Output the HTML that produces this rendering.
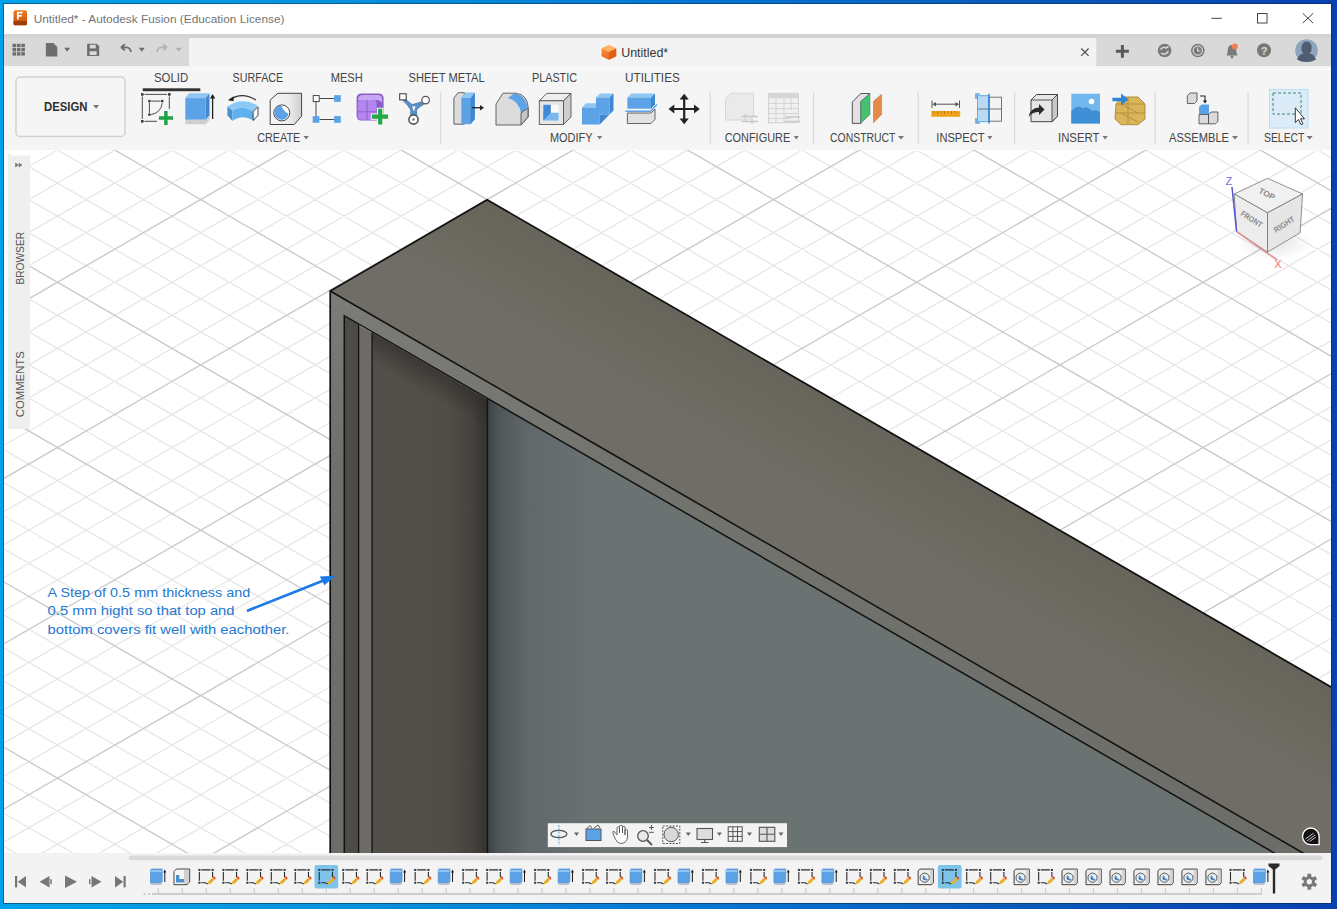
<!DOCTYPE html>
<html><head><meta charset="utf-8"><title>Untitled* - Autodesk Fusion</title>
<style>
html,body{margin:0;padding:0;width:1337px;height:909px;overflow:hidden;}
body{position:relative;background:linear-gradient(90deg,#02a2ea 0%,#0892dc 25%,#0578d4 50%,#0a5abb 76%,#0840b0 100%);font-family:"Liberation Sans",sans-serif;}
.a{position:absolute;}
</style></head><body>
<div class="a" style="left:3px;top:3px;width:1329px;height:901px;background:rgba(10,40,80,0.55)"></div>
<div class="a" style="left:4px;top:4px;width:1327px;height:899px;background:#f5f5f5;overflow:hidden"></div>
<svg style="position:absolute;left:0;top:0" width="1337" height="909" viewBox="0 0 1337 909"><defs><clipPath id="vp"><rect x="4" y="150" width="1327" height="703"/></clipPath><linearGradient id="back" x1="487.5" y1="0" x2="600" y2="0" gradientUnits="userSpaceOnUse"><stop offset="0" stop-color="#3a4244"/><stop offset="0.1" stop-color="#4e5658"/><stop offset="0.35" stop-color="#61686a"/><stop offset="1" stop-color="#6b7272"/></linearGradient><linearGradient id="rim" x1="330" y1="291" x2="1300" y2="853" gradientUnits="userSpaceOnUse"><stop offset="0" stop-color="#7b7b77"/><stop offset="0.35" stop-color="#73736e"/><stop offset="1" stop-color="#6c6d68"/></linearGradient><linearGradient id="intr" x1="372" y1="0" x2="487.5" y2="0" gradientUnits="userSpaceOnUse"><stop offset="0" stop-color="#53504b"/><stop offset="0.65" stop-color="#514d48"/><stop offset="0.87" stop-color="#46433e"/><stop offset="1" stop-color="#33312e"/></linearGradient><linearGradient id="lbar" x1="0" y1="300" x2="0" y2="853" gradientUnits="userSpaceOnUse"><stop offset="0" stop-color="#7b7b77"/><stop offset="0.27" stop-color="#70716c"/><stop offset="1" stop-color="#6d6d68"/></linearGradient><linearGradient id="topf" x1="700" y1="322.3" x2="621.25" y2="458.7" gradientUnits="userSpaceOnUse"><stop offset="0" stop-color="#67645b"/><stop offset="0.3" stop-color="#6b685f"/><stop offset="0.62" stop-color="#706e66"/><stop offset="1" stop-color="#6f6d66"/></linearGradient><linearGradient id="ishad" x1="430" y1="367" x2="417" y2="389.5" gradientUnits="userSpaceOnUse"><stop offset="0" stop-color="#2a2825" stop-opacity="0.55"/><stop offset="1" stop-color="#2a2825" stop-opacity="0"/></linearGradient></defs><rect x="4" y="150" width="1327" height="703" fill="#ffffff"/><g clip-path="url(#vp)"><path d="M-1.00 -611.07L1336.00 160.60M-1.00 -544.95L1336.00 226.72M-1.00 -511.89L1336.00 259.78M-1.00 -478.83L1336.00 292.84M-1.00 -445.77L1336.00 325.90M-1.00 -379.65L1336.00 392.02M-1.00 183.77L1336.00 -587.90M-1.00 -346.59L1336.00 425.08M-1.00 216.83L1336.00 -554.84M-1.00 -313.53L1336.00 458.14M-1.00 249.89L1336.00 -521.78M-1.00 -280.47L1336.00 491.20M-1.00 282.95L1336.00 -488.72M-1.00 -214.35L1336.00 557.32M-1.00 349.07L1336.00 -422.60M-1.00 -181.29L1336.00 590.38M-1.00 382.13L1336.00 -389.54M-1.00 -148.23L1336.00 623.44M-1.00 415.19L1336.00 -356.48M-1.00 -115.17L1336.00 656.50M-1.00 448.25L1336.00 -323.42M-1.00 -49.05L1336.00 722.62M-1.00 514.37L1336.00 -257.30M-1.00 -15.99L1336.00 755.68M-1.00 547.43L1336.00 -224.24M-1.00 17.07L1336.00 788.74M-1.00 580.49L1336.00 -191.18M-1.00 50.13L1336.00 821.80M-1.00 613.55L1336.00 -158.12M-1.00 116.25L1336.00 887.92M-1.00 679.67L1336.00 -92.00M-1.00 149.31L1336.00 920.98M-1.00 712.73L1336.00 -58.94M-1.00 182.37L1336.00 954.04M-1.00 745.79L1336.00 -25.88M-1.00 215.43L1336.00 987.10M-1.00 778.85L1336.00 7.18M-1.00 281.55L1336.00 1053.22M-1.00 844.97L1336.00 73.30M-1.00 314.61L1336.00 1086.28M-1.00 878.03L1336.00 106.36M-1.00 347.67L1336.00 1119.34M-1.00 911.09L1336.00 139.42M-1.00 380.73L1336.00 1152.40M-1.00 944.15L1336.00 172.48M-1.00 446.85L1336.00 1218.52M-1.00 1010.27L1336.00 238.60M-1.00 479.91L1336.00 1251.58M-1.00 1043.33L1336.00 271.66M-1.00 512.97L1336.00 1284.64M-1.00 1076.39L1336.00 304.72M-1.00 546.03L1336.00 1317.70M-1.00 1109.45L1336.00 337.78M-1.00 612.15L1336.00 1383.82M-1.00 1175.57L1336.00 403.90M-1.00 645.21L1336.00 1416.88M-1.00 1208.63L1336.00 436.96M-1.00 678.27L1336.00 1449.94M-1.00 1241.69L1336.00 470.02M-1.00 711.33L1336.00 1483.00M-1.00 1274.75L1336.00 503.08M-1.00 777.45L1336.00 1549.12M-1.00 1340.87L1336.00 569.20M-1.00 810.51L1336.00 1582.18M-1.00 1373.93L1336.00 602.26M-1.00 843.57L1336.00 1615.24M-1.00 1406.99L1336.00 635.32M-1.00 1440.05L1336.00 668.38M-1.00 1506.17L1336.00 734.50M-1.00 1539.23L1336.00 767.56M-1.00 1572.29L1336.00 800.62M-1.00 1605.35L1336.00 833.68" stroke="#e6e6e6" stroke-width="1.25" fill="none"/><path d="M-1.00 -578.01L1336.00 193.66M-1.00 -412.71L1336.00 358.96M-1.00 150.71L1336.00 -620.96M-1.00 -247.41L1336.00 524.26M-1.00 316.01L1336.00 -455.66M-1.00 -82.11L1336.00 689.56M-1.00 481.31L1336.00 -290.36M-1.00 83.19L1336.00 854.86M-1.00 646.61L1336.00 -125.06M-1.00 248.49L1336.00 1020.16M-1.00 811.91L1336.00 40.24M-1.00 413.79L1336.00 1185.46M-1.00 977.21L1336.00 205.54M-1.00 579.09L1336.00 1350.76M-1.00 1142.51L1336.00 370.84M-1.00 744.39L1336.00 1516.06M-1.00 1307.81L1336.00 536.14M-1.00 1473.11L1336.00 701.44" stroke="#cbcbcb" stroke-width="1.4" fill="none"/><polygon points="330.2,291.0 487.1,199.8 1333,688.05 1333,855 1306.49,855" fill="url(#topf)"/><polygon points="330.2,291.0 1306.49,855 1277.67,855 344.3,315.7 344.3,855 330.2,855" fill="url(#rim)"/><polygon points="330.2,291.0 344.3,299.15 344.3,855 330.2,855" fill="url(#lbar)"/><polygon points="344.3,315.70 358.6,323.96 358.6,855 344.3,855" fill="#4e4a47"/><polygon points="358.6,324.96 372.1,332.76 372.1,855 358.6,855" fill="#6c6b66"/><polygon points="372.1,332.76 487.5,399.44 487.5,855 372.1,855" fill="url(#intr)"/><polygon points="487.5,398.44 1277.67,855 487.5,855" fill="url(#back)"/><polygon points="372.1,331.76 487.5,398.44 487.5,458.44 372.1,391.76" fill="url(#ishad)"/><path d="M330.2,855 L330.2,291.0 L487.1,199.8 L1333,688.05" stroke="#111" stroke-width="1.7" fill="none" stroke-linejoin="miter"/><path d="M330.2,291.0 L1306.49,855" stroke="#111" stroke-width="1.6" fill="none"/><path d="M344.3,855 L344.3,315.7 L1277.67,855" stroke="#111" stroke-width="1.5" fill="none"/><path d="M358.6,855 L358.6,324.46 M372.1,855 L372.1,332.76 M487.5,855 L487.5,398.94" stroke="#111" stroke-width="1.3" fill="none"/></g></svg>
<svg style="position:absolute;left:0;top:0" width="1337" height="909" viewBox="0 0 1337 909" font-family='"Liberation Sans",sans-serif'><rect x="4" y="4" width="1327" height="30" fill="#ffffff"/><defs><linearGradient id="appg" x1="0" y1="0" x2="0" y2="1"><stop offset="0" stop-color="#f0781e"/><stop offset="1" stop-color="#c2500c"/></linearGradient><linearGradient id="cubeg" x1="0" y1="0" x2="0" y2="1"><stop offset="0" stop-color="#ffa04a"/><stop offset="1" stop-color="#e8651a"/></linearGradient></defs><rect x="13.5" y="10.2" width="13.5" height="15" rx="2" fill="url(#appg)"/><rect x="13.5" y="21" width="13.5" height="4.3" rx="1" fill="#9a3f08"/><path d="M17.8 19.5V12.6H22.6M17.8 15.8H21.8" stroke="#fff" stroke-width="1.7" fill="none"/><text x="33.70" y="22.50" font-size="11.6" fill="#737373" font-weight="normal" textLength="250.80" lengthAdjust="spacingAndGlyphs">Untitled* - Autodesk Fusion (Education License)</text><path d="M1211.4 18.3H1221.9" stroke="#444" stroke-width="1"/><rect x="1257.5" y="13.5" width="9.5" height="9.5" stroke="#444" stroke-width="1" fill="none"/><path d="M1302.7 13.3L1313.1 23.1M1313.1 13.3L1302.7 23.1" stroke="#444" stroke-width="1"/><rect x="4" y="34" width="1327" height="32" fill="#d9d9d9"/><rect x="4" y="34" width="1327" height="4" fill="#d3d3d3"/><rect x="189" y="38" width="907.3" height="28" fill="#f3f3f3"/><rect x="12.5" y="43.8" width="3.6" height="3.4" fill="#6e6e6e"/><rect x="12.5" y="48.0" width="3.6" height="3.4" fill="#6e6e6e"/><rect x="12.5" y="52.2" width="3.6" height="3.4" fill="#6e6e6e"/><rect x="16.9" y="43.8" width="3.6" height="3.4" fill="#6e6e6e"/><rect x="16.9" y="48.0" width="3.6" height="3.4" fill="#6e6e6e"/><rect x="16.9" y="52.2" width="3.6" height="3.4" fill="#6e6e6e"/><rect x="21.3" y="43.8" width="3.6" height="3.4" fill="#6e6e6e"/><rect x="21.3" y="48.0" width="3.6" height="3.4" fill="#6e6e6e"/><rect x="21.3" y="52.2" width="3.6" height="3.4" fill="#6e6e6e"/><path d="M45.9 43.1H53.5L57.3 46.9V56.6H45.9Z" fill="#6e6e6e"/><polygon points="64.20,47.80 70.20,47.80 67.20,51.80" fill="#6e6e6e"/><path d="M87.1 43.8H96.7L99.2 46.3V55.9H87.1Z" fill="#6e6e6e"/><rect x="89.8" y="44.8" width="6" height="3.6" fill="#d9d9d9"/><rect x="89.6" y="51.2" width="7" height="3.8" fill="#d9d9d9"/><path d="M121 47.3 L125 44.3 M121 47.3 L125 50.3 M121.5 47.3 H126.5 A4.5 4.5 0 0 1 130.8 52" stroke="#6e6e6e" stroke-width="1.8" fill="none"/><polygon points="138.80,47.80 144.80,47.80 141.80,51.80" fill="#6e6e6e"/><path d="M167 47.3 L163 44.3 M167 47.3 L163 50.3 M166.5 47.3 H161.5 A4.5 4.5 0 0 0 157.2 52" stroke="#b4b4b4" stroke-width="1.8" fill="none"/><polygon points="175.70,47.80 181.70,47.80 178.70,51.80" fill="#b0b0b0"/><path d="M601.6 48.5L608.9 45.1L616.2 48.5V56.3L608.9 59.7L601.6 56.3Z" fill="url(#cubeg)"/><path d="M601.6 48.5L608.9 51.9L616.2 48.5L608.9 45.1Z" fill="#ffb366"/><path d="M608.9 51.9V59.7L616.2 56.3V48.5Z" fill="#e05e12"/><text x="621.20" y="56.70" font-size="12.5" fill="#333" font-weight="normal" textLength="47.00" lengthAdjust="spacingAndGlyphs">Untitled*</text><path d="M1081.2 48.5L1088.6 55.9M1088.6 48.5L1081.2 55.9" stroke="#555" stroke-width="1.3"/><path d="M1122.4 45V57.7M1115.9 51.3H1128.9" stroke="#5a5a5a" stroke-width="3"/><circle cx="1164.6" cy="50.5" r="6.8" fill="#787878"/><path d="M1160.5 49.5 Q1163 46 1166 48 L1168.5 46.5 M1161 53 Q1165 56 1168.5 51" stroke="#d9d9d9" stroke-width="1.5" fill="none"/><circle cx="1197.8" cy="50.5" r="6.8" fill="#787878"/><circle cx="1197.8" cy="50.5" r="4.6" fill="none" stroke="#d9d9d9" stroke-width="1.2"/><path d="M1197.6 47.5V51H1200.3" stroke="#d9d9d9" stroke-width="1.2" fill="none"/><path d="M1226.5 55.5Q1227.8 53.5 1227.8 49.5Q1228 45.2 1232 45Q1236 45.2 1236.2 49.5Q1236.2 53.5 1237.5 55.5Z" fill="#7a7a7a"/><circle cx="1232" cy="57" r="1.4" fill="#7a7a7a"/><circle cx="1234.8" cy="46.5" r="3" fill="#f08050"/><circle cx="1264" cy="50.3" r="7" fill="#787878"/><text x="1264" y="54.6" font-size="11" font-weight="bold" fill="#d9d9d9" text-anchor="middle">?</text><circle cx="1306.5" cy="50.5" r="11.3" fill="#8ea4bd"/><path d="M1297 59.5Q1299 54 1303.5 53.5Q1301 51 1301.5 47Q1302.5 41.5 1306.5 41.5Q1311 41.5 1311.7 47Q1312 51 1309.5 53.5Q1314 54 1316 59.5Q1312 62 1306.5 62Q1301 62 1297 59.5Z" fill="#4f5d70"/><rect x="4" y="66" width="1327" height="84" fill="#f5f5f5"/><rect x="4" y="68.6" width="1327" height="1" fill="#fcfcfc"/><rect x="16" y="77" width="109" height="59.5" rx="4" fill="#f5f5f5" stroke="#d2d2d2" stroke-width="1.5"/><text x="44.00" y="110.80" font-size="12.2" fill="#2e2e2e" font-weight="bold" textLength="43.50" lengthAdjust="spacingAndGlyphs">DESIGN</text><polygon points="93.10,104.90 99.10,104.90 96.10,108.70" fill="#777"/><text x="153.90" y="81.80" font-size="12.9" fill="#444444" font-weight="normal" textLength="34.30" lengthAdjust="spacingAndGlyphs">SOLID</text><text x="232.50" y="81.80" font-size="12.9" fill="#444444" font-weight="normal" textLength="50.70" lengthAdjust="spacingAndGlyphs">SURFACE</text><text x="330.70" y="81.80" font-size="12.9" fill="#444444" font-weight="normal" textLength="32.00" lengthAdjust="spacingAndGlyphs">MESH</text><text x="408.50" y="81.80" font-size="12.9" fill="#444444" font-weight="normal" textLength="76.10" lengthAdjust="spacingAndGlyphs">SHEET METAL</text><text x="532.00" y="81.80" font-size="12.9" fill="#444444" font-weight="normal" textLength="45.00" lengthAdjust="spacingAndGlyphs">PLASTIC</text><text x="625.00" y="81.80" font-size="12.9" fill="#444444" font-weight="normal" textLength="54.80" lengthAdjust="spacingAndGlyphs">UTILITIES</text><rect x="142.7" y="88.3" width="57.6" height="2.9" fill="#333"/><text x="257.20" y="141.70" font-size="12.6" fill="#444444" font-weight="normal" textLength="43.10" lengthAdjust="spacingAndGlyphs">CREATE</text><polygon points="303.50,136.00 308.80,136.00 306.15,139.60" fill="#777"/><text x="550.00" y="141.70" font-size="12.6" fill="#444444" font-weight="normal" textLength="42.50" lengthAdjust="spacingAndGlyphs">MODIFY</text><polygon points="597.00,136.00 602.20,136.00 599.60,139.60" fill="#777"/><text x="724.70" y="141.70" font-size="12.6" fill="#444444" font-weight="normal" textLength="65.50" lengthAdjust="spacingAndGlyphs">CONFIGURE</text><polygon points="793.80,136.00 798.80,136.00 796.30,139.60" fill="#777"/><text x="830.00" y="141.70" font-size="12.6" fill="#444444" font-weight="normal" textLength="65.50" lengthAdjust="spacingAndGlyphs">CONSTRUCT</text><polygon points="898.00,136.00 904.00,136.00 901.00,139.60" fill="#777"/><text x="936.30" y="141.70" font-size="12.6" fill="#444444" font-weight="normal" textLength="48.20" lengthAdjust="spacingAndGlyphs">INSPECT</text><polygon points="987.30,136.00 992.50,136.00 989.90,139.60" fill="#777"/><text x="1058.00" y="141.70" font-size="12.6" fill="#444444" font-weight="normal" textLength="41.50" lengthAdjust="spacingAndGlyphs">INSERT</text><polygon points="1102.50,136.00 1107.80,136.00 1105.15,139.60" fill="#777"/><text x="1169.00" y="141.70" font-size="12.6" fill="#444444" font-weight="normal" textLength="60.00" lengthAdjust="spacingAndGlyphs">ASSEMBLE</text><polygon points="1232.00,136.00 1238.00,136.00 1235.00,139.60" fill="#777"/><text x="1264.00" y="141.70" font-size="12.6" fill="#444444" font-weight="normal" textLength="40.40" lengthAdjust="spacingAndGlyphs">SELECT</text><polygon points="1306.50,136.00 1312.70,136.00 1309.60,139.60" fill="#777"/><rect x="440.0" y="92" width="1.3" height="52" fill="#dcdcdc"/><rect x="709.6" y="92" width="1.3" height="52" fill="#dcdcdc"/><rect x="812.9" y="92" width="1.3" height="52" fill="#dcdcdc"/><rect x="917.6" y="92" width="1.3" height="52" fill="#dcdcdc"/><rect x="1013.9" y="92" width="1.3" height="52" fill="#dcdcdc"/><rect x="1154.4" y="92" width="1.3" height="52" fill="#dcdcdc"/><rect x="1247.4" y="92" width="1.3" height="52" fill="#dcdcdc"/><rect x="141.0" y="93.10000000000001" width="2.6" height="2.6" fill="#3a3a3a"/><rect x="168.0" y="93.10000000000001" width="2.6" height="2.6" fill="#3a3a3a"/><rect x="141.0" y="120.0" width="2.6" height="2.6" fill="#3a3a3a"/><path d="M144.5 94.4H167M142.3 96.5V119M144.5 121.3H157M169.3 96.5V109" stroke="#3a3a3a" stroke-width="0.9" fill="none"/><rect x="148.20000000000002" y="99.89999999999999" width="2.4" height="2.4" fill="#3a3a3a"/><rect x="161.0" y="99.89999999999999" width="2.4" height="2.4" fill="#3a3a3a"/><rect x="148.20000000000002" y="113.39999999999999" width="2.4" height="2.4" fill="#3a3a3a"/><path d="M151 101.1H160.5M149.4 102.8V112.8M162.2 103.2Q161 112.5 151.2 114.6" stroke="#3a3a3a" stroke-width="0.9" fill="none"/><path d="M165.9 110.9V125M158.9 118H173" stroke="#1fa045" stroke-width="3.4"/><path d="M185.3 98.1L189 93.2H209.5L205.8 98.1Z" fill="#8fc6f2"/><path d="M205.8 98.1L209.5 93.2V115.3L205.8 119.8Z" fill="#3f88d0"/><rect x="185.3" y="98.1" width="20.5" height="21.7" fill="#5ba3e6"/><path d="M185.3 119.8H205.8L209.5 115.3V120L205.8 124.3H185.3Z" fill="#cfcfcf"/><path d="M212.6 119V97" stroke="#222" stroke-width="1.3"/><path d="M209.9 98.5L212.6 94L215.3 98.5Z" fill="#222"/><path d="M230 99.5 Q242 91.5 255.9 99.9" stroke="#333" stroke-width="1.2" fill="none"/><path d="M227.8 100.3L233.8 96.3L233.5 101.2Z" fill="#222"/><path d="M227.4 106.4Q242 96.5 257.6 105.6L253 111.4Q242 104.5 232.4 110.6Z" fill="#8ccaf6"/><path d="M227.4 106.4L232.4 110.6V121L227.4 115.2Z" fill="#4a90d0"/><path d="M232.4 110.6Q242 104.5 253 111.4V120.2Q242 114 232.4 121Z" fill="#5fb0ee"/><path d="M253 111.4L258 106.8V115.2L253.3 120.6Z" fill="#fafafa" stroke="#333" stroke-width="0.9"/><defs><linearGradient id="holeg" x1="0" y1="0" x2="1" y2="0"><stop offset="0" stop-color="#f6f6f6"/><stop offset="0.6" stop-color="#ececec"/><stop offset="1" stop-color="#cfcfcf"/></linearGradient></defs><path d="M270.2 99.9L277.9 93.3H301.6V116.2L294.2 124.5H270.2Z" fill="url(#holeg)" stroke="#444" stroke-width="1"/><circle cx="281.8" cy="112.9" r="8" fill="#fff" stroke="#4a4a4a" stroke-width="1"/><path d="M281.3 105.6A7.1 7.1 0 1 0 288.6 113.6Q283.5 112 281.3 105.6Z" fill="#5ba3e6"/><path d="M319.4 98.5H334.1M316 101.9V116.1M319.4 119.5H334.1" stroke="#333" stroke-width="0.9"/><rect x="313.2" y="95.6" width="6" height="6" fill="#fff" stroke="#333" stroke-width="0.9"/><rect x="334.1" y="95.2" width="6.7" height="6.7" fill="#5ba3e6"/><rect x="312.7" y="116.1" width="6.7" height="6.7" fill="#5ba3e6"/><rect x="334.1" y="116.1" width="6.7" height="6.7" fill="#5ba3e6"/><rect x="356.6" y="93.5" width="27" height="27" rx="4.5" fill="#8a5cc8"/><path d="M358 99.9Q358 95 363 95H378Q382.5 95 382 99.5V103Q380 99.9 376.6 99.9Z" fill="#c9a6f2"/><rect x="357.8" y="99.9" width="18.8" height="19.8" rx="3" fill="#b386f0"/><path d="M367 100V119.7M357.8 111.8H376.6" stroke="#8a5cc8" stroke-width="0.9"/><path d="M377 107.7H383.4V113.4H389.1V119.8H383.4V125.5H377V119.8H370.8V113.4H377Z" fill="#f5f5f5"/><path d="M380.2 108.7V124.5M371.8 116.6H388.1" stroke="#22a845" stroke-width="4.2"/><path d="M405 98.5Q410 103.5 412.5 104.5Q418 103 422.5 101.5L423.5 104.5Q418.5 107 416.5 110L416.8 115.5H410.6L410.8 110Q408.5 105.5 403 100.5Z" fill="#5a8fc6" stroke="#3f6f9f" stroke-width="0.7"/><path d="M412.2 106.3H415.6L414.4 110.5H413.2Z" fill="#eaf3fb"/><rect x="399.7" y="93.8" width="6.5" height="6.1" fill="#fff" stroke="#333" stroke-width="1"/><circle cx="425.6" cy="100.1" r="3.8" fill="#fff" stroke="#555" stroke-width="1.2"/><circle cx="413.5" cy="119.5" r="4.6" fill="#fff" stroke="#555" stroke-width="1.6"/><circle cx="413.5" cy="119.5" r="1.3" fill="#777"/><path d="M453.9 98L458 92.7H464.3V124.2H453.9Z" fill="#dcdcdc" stroke="#555" stroke-width="0.9"/><path d="M461.3 98L465.5 92.7H474.8V119L470.5 124.2H461.3Z" fill="#5ba3e6"/><path d="M470.5 98L474.8 92.7V119L470.5 124.2Z" fill="#3f88d0"/><path d="M461.3 98L465.5 92.7H474.8L470.5 98Z" fill="#8fc6f2"/><path d="M472 107.7H481" stroke="#222" stroke-width="1.3"/><path d="M480 105L484 107.7L480 110.4Z" fill="#222"/><path d="M496 104L503 93.2H516Q528 95 528.2 108V117L521 125H496Z" fill="#dcdcdc" stroke="#555" stroke-width="0.9"/><path d="M508 98L514 93.5Q526 95 527.5 108L521 113Q519 101 508 98Z" fill="#5ba3e6"/><path d="M521 113L528 108V117L521 125Z" fill="#c4c4c4" stroke="#555" stroke-width="0.9"/><path d="M539.3 100.8L546.8 93.4H571L563.5 100.8Z" fill="#efefef" stroke="#555" stroke-width="0.9"/><path d="M563.5 100.8L571 93.4V117L563.5 124.5Z" fill="#cdcdcd" stroke="#555" stroke-width="0.9"/><rect x="539.3" y="100.8" width="24.2" height="23.7" fill="#e6e6e6" stroke="#555" stroke-width="0.9"/><rect x="543.3" y="104.8" width="15.3" height="15.8" fill="#fafafa"/><rect x="543.3" y="112.7" width="15.3" height="7.9" fill="#79b8ef"/><path d="M543.3 104.8H550.8V112.7L543.3 120.6Z" fill="#3f8ad6"/><path d="M582 107.5L586 103.3H596V107.5Z M596 97.5L600 93.4H613.5L609.5 97.5Z" fill="#8fc6f2"/><path d="M582 107.5H596V97.5H609.5V114.6H599.7V124.5H582Z" fill="#5ba3e6"/><path d="M609.5 97.5L613.5 93.4V110.5L609.5 114.6Z M599.7 114.6H609.5L603.7 120.4V120.5L599.7 124.5Z" fill="#3f88d0"/><path d="M627.4 97.5L631.5 93.4H655L651 97.5Z" fill="#8fc6f2"/><rect x="627.4" y="97.5" width="23.6" height="11.2" fill="#5ba3e6"/><path d="M651 97.5L655 93.4V104.6L651 108.7Z" fill="#3f88d0"/><path d="M625.4 111.2H650.5L657 104.5" stroke="#5ba3e6" stroke-width="1.4" fill="none"/><path d="M627.4 113H651L655 109V119.5L651 123.5H627.4Z" fill="#e2e2e2" stroke="#555" stroke-width="0.9"/><path d="M684.2 96V121.5M670.5 109H698" stroke="#222" stroke-width="2.2"/><path d="M684.2 93.7L688.8 99.5H679.6Z M684.2 124.2L688.8 118.4H679.6Z M668.5 109L674.3 104.4V113.6Z M699.8 109L694 104.4V113.6Z" fill="#222"/><path d="M725.5 99L731 93.2H753.5V117L748 120H725.5Z" fill="#eaeaea" stroke="#d4d4d4" stroke-width="0.9"/><path d="M742 116.5H758M742 121.5H758M745 114V119M752 119V124" stroke="#c8c8c8" stroke-width="1.4"/><rect x="768.5" y="93.3" width="30" height="29.5" fill="#f0f0f0" stroke="#cfcfcf" stroke-width="0.9"/><rect x="768.5" y="93.3" width="30" height="5" fill="#d6d6d6"/><path d="M768.5 103.5H798.5M768.5 108.5H798.5M768.5 113.5H798.5M768.5 118.5H790M776 98.3V122.8M784 98.3V122.8M791 98.3V110" stroke="#d0d0d0" stroke-width="0.9"/><path d="M785 117H800M785 121.5H800" stroke="#c8c8c8" stroke-width="1.4"/><path d="M852.3 102.1L860.7 93.5H869.9L860.9 101.6V123.4H852.3Z" fill="#e2e0e4" stroke="#444" stroke-width="0.9"/><path d="M860.9 101.6L869.9 93.5V114.4L860.9 123.2Z" fill="#45c070" stroke="#3a7a55" stroke-width="0.6"/><path d="M873.5 101.2L881.6 94.2V114.4L873.5 122.8Z" fill="#e8894a" stroke="#b07040" stroke-width="0.5"/><rect x="931.4" y="111" width="28.8" height="5.8" fill="#f0a41c"/><path d="M934 111V113M937.5 111V114.5M941 111V113M944.5 111V114.5M948 111V113M951.5 111V114.5M955 111V113" stroke="#b87000" stroke-width="0.8"/><path d="M932 100.5V108M959.5 100.5V108M933.5 104.2H958" stroke="#555" stroke-width="1"/><path d="M932.5 104.2L936 102V106.4Z M959 104.2L955.5 102V106.4Z" fill="#555"/><rect x="977.5" y="95.7" width="11.5" height="26" fill="#b9d9f5" stroke="#5ba3e6" stroke-width="0.9"/><rect x="989" y="97.2" width="12.5" height="24" fill="#f3f3f3" stroke="#666" stroke-width="0.9"/><path d="M977.5 109H1001.5" stroke="#666" stroke-width="0.9"/><path d="M989 93.7V123.4" stroke="#2f86d8" stroke-width="1.5"/><path d="M980 94H976V99 M976 118V123H980" stroke="#2f86d8" stroke-width="1.2" fill="none"/><path d="M1031 100L1036.5 94.5H1057.5V116.5L1052 121.7H1031Z" fill="#e6e6e6" stroke="#444" stroke-width="1"/><path d="M1052 100L1057.5 94.5V116.5L1052 121.7Z" fill="#c8c8c8" stroke="#444" stroke-width="0.9"/><path d="M1031 100H1052" stroke="#444" stroke-width="0.9"/><path d="M1028.5 117Q1030 108 1039 107.5V104L1044.5 109.5L1039 115V112Q1032 112 1028.5 117Z" fill="#2a2a2a"/><rect x="1071.3" y="93.7" width="28.7" height="29.7" fill="#72b8ef"/><path d="M1071.3 123.4V111Q1078 104 1083 108.5Q1087 105 1092 111Q1096 109 1100 112V123.4Z" fill="#3f8fd6"/><circle cx="1091.5" cy="101.5" r="2.8" fill="#fff"/><path d="M1116 104L1122 97H1138L1145 104V119L1138 124.7H1121L1115 119Z" fill="#d9b558" stroke="#a8893a" stroke-width="0.9"/><path d="M1116 104H1145M1115 113H1145M1121 104L1138 113M1121 113L1138 122M1128 97V124" stroke="#a8893a" stroke-width="0.8"/><path d="M1112.4 97.8H1121V93.5L1128.5 99.5L1121 105.5V101.2H1112.4Z" fill="#2f86d8"/><path d="M1187.3 96L1190 93H1197V101L1194.5 103.5H1187.3Z" fill="#dadada" stroke="#555" stroke-width="0.9"/><path d="M1200 96H1205V101" stroke="#222" stroke-width="1.1" fill="none"/><path d="M1202.8 100.5H1207.2L1205 103.5Z" fill="#222"/><path d="M1199 107L1201.5 104.5H1209V114.5H1199Z" fill="#5ba3e6"/><path d="M1199 114.5H1208.5V123.8H1199Z M1208.5 114.5L1211 112H1217.9V121.5L1215.5 123.8H1208.5Z" fill="#dadada" stroke="#555" stroke-width="0.9"/><rect x="1269.5" y="89.4" width="38.6" height="38.6" fill="#dcebf8" stroke="#bcdcf2" stroke-width="1"/><rect x="1273" y="93" width="28" height="21" fill="none" stroke="#3d8a6a" stroke-width="1" stroke-dasharray="3 2"/><path d="M1295.3 107.8V122.5L1298.5 119.5L1301 124.7L1303 123.7L1300.5 118.8H1304.5Z" fill="#fff" stroke="#222" stroke-width="0.9"/></svg>
<svg style="position:absolute;left:0;top:0" width="1337" height="909" viewBox="0 0 1337 909" font-family='"Liberation Sans",sans-serif'><rect x="4" y="150" width="4" height="279" fill="#fff" fill-opacity="0.8"/><rect x="8" y="155.5" width="22" height="273.5" fill="#eeeeee" fill-opacity="0.95"/><path d="M15.2 162.4L18.8 165L15.2 167.6Z M18.8 162.4L22.4 165L18.8 167.6Z" fill="#777"/><g transform="translate(23.8,284.5) rotate(-90)"><text x="0.00" y="0.00" font-size="11.8" fill="#555" font-weight="normal" textLength="52.50" lengthAdjust="spacingAndGlyphs">BROWSER</text></g><g transform="translate(23.8,417.2) rotate(-90)"><text x="0.00" y="0.00" font-size="11.8" fill="#555" font-weight="normal" textLength="66.00" lengthAdjust="spacingAndGlyphs">COMMENTS</text></g><text x="47.60" y="596.50" font-size="12.8" fill="#2378d2" font-weight="normal" textLength="202.70" lengthAdjust="spacingAndGlyphs">A Step of 0.5 mm thickness and</text><text x="47.60" y="615.20" font-size="12.8" fill="#2378d2" font-weight="normal" textLength="186.90" lengthAdjust="spacingAndGlyphs">0.5 mm hight so that top and</text><text x="47.60" y="634.00" font-size="12.8" fill="#2378d2" font-weight="normal" textLength="241.90" lengthAdjust="spacingAndGlyphs">bottom covers fit well with eachother.</text><path d="M248 610.5L326 579.5" stroke="#1a7ae8" stroke-width="2.7" stroke-linecap="round"/><path d="M335.4 575.8L319.8 576.6L324.4 585.2Z" fill="#1a7ae8"/><defs><radialGradient id="vcs" cx="0.5" cy="0.5" r="0.5"><stop offset="0" stop-color="#000" stop-opacity="0.10"/><stop offset="1" stop-color="#000" stop-opacity="0"/></radialGradient></defs><ellipse cx="1275" cy="243" rx="38" ry="17" fill="url(#vcs)"/><polygon points="1267.5,178.3 1302.6,194 1267.5,212.8 1234.2,194" fill="#f1f1f1" stroke="#666" stroke-width="0.7"/><polygon points="1234.2,194 1267.5,212.8 1267.5,252.1 1236.6,231.6" fill="#ececec" stroke="#666" stroke-width="0.7"/><polygon points="1267.5,212.8 1302.6,194 1300.1,232.8 1267.5,252.1" fill="#e6e6e6" stroke="#666" stroke-width="0.7"/><g transform="translate(1258,192.5) rotate(27)"><text x="0" y="0" font-size="8" fill="#8a8a8a" font-weight="bold" textLength="17" lengthAdjust="spacingAndGlyphs">TOP</text></g><g transform="translate(1240,215) rotate(32)"><text x="0" y="0" font-size="8" fill="#8a8a8a" font-weight="bold" textLength="24" lengthAdjust="spacingAndGlyphs">FRONT</text></g><g transform="translate(1276,233) rotate(-33)"><text x="0" y="0" font-size="8" fill="#8a8a8a" font-weight="bold" textLength="23" lengthAdjust="spacingAndGlyphs">RIGHT</text></g><path d="M1232 187L1236.6 231.6" stroke="#5555d5" stroke-width="1.5"/><text x="1225.5" y="185" font-size="11" fill="#7070dd">Z</text><path d="M1236.6 231.6L1277 260" stroke="#e88080" stroke-width="1.6" stroke-opacity="0.8"/><text x="1274.5" y="268" font-size="10.5" fill="#ec7070">X</text><path d="M1319.1 844.6H1310.8A8.3 8.3 0 1 1 1319.1 836.3Z" fill="#111" stroke="#fff" stroke-width="1.3"/><path d="M1305.5 839L1313.5 833.2M1306.8 841L1315.2 835M1309.5 841.5L1315.8 837.2" stroke="#ddd" stroke-width="0.9"/><rect x="547.8" y="823.2" width="239.2" height="23.9" fill="#f3f3f3"/><ellipse cx="558.9" cy="834" rx="8" ry="3.6" fill="none" stroke="#555" stroke-width="1.3"/><path d="M558.9 825V845" stroke="#7fb8e8" stroke-width="1.4" stroke-dasharray="2 1.3"/><polygon points="574.00,832.55 579.00,832.55 576.50,836.05" fill="#666"/><rect x="586" y="829" width="15" height="11.5" fill="#5ba3e6" stroke="#555" stroke-width="1"/><path d="M586.5 829L590 825.5L592 828M594 828L598 825L600 828" stroke="#555" stroke-width="1" fill="none"/><path d="M614 836Q612 832 613.5 831L617 835V827.5Q618.5 826 619.5 827.5V833V826Q621 824.5 622.5 826V833V827Q624 825.5 625 827V835V830Q626.5 828.5 627.5 830V837Q627 843 621 843.5Q617 843.5 614 836Z" fill="#fff" stroke="#555" stroke-width="0.9"/><circle cx="643" cy="836" r="5.3" fill="#e8e8e8" stroke="#555" stroke-width="1.3"/><path d="M647 840L652 845" stroke="#555" stroke-width="1.8"/><path d="M649 827.5H653.8M651.4 825V830M649 832.3H653.8" stroke="#555" stroke-width="1"/><rect x="662.8" y="826" width="17" height="17.5" fill="none" stroke="#555" stroke-width="1" stroke-dasharray="2 1.3"/><circle cx="671.2" cy="834.5" r="7.2" fill="#d8d8d8" stroke="#555" stroke-width="1"/><polygon points="685.80,832.55 690.80,832.55 688.30,836.05" fill="#666"/><rect x="697" y="828.5" width="15.5" height="11" fill="#ddd" stroke="#555" stroke-width="1.1"/><path d="M701 842.5H708.5M704.7 839.5V842.5" stroke="#555" stroke-width="1.1"/><polygon points="716.90,832.55 721.90,832.55 719.40,836.05" fill="#666"/><rect x="728.2" y="826.8" width="14" height="14.5" fill="none" stroke="#555" stroke-width="1"/><path d="M732.9 826.8V841.3M737.5 826.8V841.3M728.2 831.6H742.2M728.2 836.4H742.2" stroke="#555" stroke-width="1"/><polygon points="747.00,832.55 752.00,832.55 749.50,836.05" fill="#666"/><rect x="759.3" y="827.3" width="15.5" height="14" fill="#ddd" stroke="#555" stroke-width="1.1"/><path d="M767 827.3V841.3M759.3 834.3H774.8" stroke="#555" stroke-width="1.1"/><polygon points="778.50,832.55 783.50,832.55 781.00,836.05" fill="#666"/><rect x="4" y="853" width="1327" height="50" fill="#f3f3f3"/><rect x="128.5" y="855.6" width="1194" height="4.6" rx="2.3" fill="#dadada"/><rect x="15" y="876" width="2.2" height="11.4" fill="#777"/><path d="M26 876L17.8 881.7L26 887.4Z" fill="#777"/><path d="M49.5 876L39.6 881.7L49.5 887.4Z" fill="#777"/><rect x="50.3" y="879.2" width="1.5" height="5" fill="#777"/><path d="M65 875.5L77 881.7L65 888Z" fill="#777"/><rect x="89" y="879.2" width="1.5" height="5" fill="#777"/><path d="M91.5 876L101.5 881.7L91.5 887.4Z" fill="#777"/><path d="M115 876L123.3 881.7L115 887.4Z" fill="#777"/><rect x="123.5" y="876" width="2.2" height="11.4" fill="#777"/><path d="M141 894H1262" stroke="#cdcdcd" stroke-width="2"/><path d="M141 894H152" stroke="#f3f3f3" stroke-width="2.2" stroke-dasharray="2.5 2"/><path d="M158.3 888V894" stroke="#cdcdcd" stroke-width="1.2"/><path d="M150.5 870.5Q150.5 869 152.0 869H162.2V881Q162.2 883 160.2 883H150.5Z" fill="#5ba3e6" stroke="#4a8acb" stroke-width="0.7"/><path d="M150.5 870H161.7V872H150.5Z" fill="#8fc6f2"/><path d="M150.8 883H160.2Q162.2 883 162.2 881V883Q162.0 885 160.0 885H150.8Z" fill="#b9c4cc"/><path d="M164.8 882V871.5" stroke="#1a1a1a" stroke-width="1"/><path d="M163.3 872.6L164.8 869.6L166.3 872.6Z" fill="#1a1a1a"/><path d="M182.3 888V894" stroke="#cdcdcd" stroke-width="1.2"/><path d="M173.98 871.5L176.48 869H189.67999999999998V882L186.98 884.7H173.98Z" fill="#f6f6f6" stroke="#444" stroke-width="1"/><path d="M183.98 870H188.98V881.5L186.48 884H183.98Z" fill="#d0d0d0"/><path d="M175.98 875H179.28V879H183.98V882.4H175.98Z" fill="#4a8fd0"/><path d="M206.3 888V894" stroke="#cdcdcd" stroke-width="1.2"/><rect x="198.36" y="868.9" width="2.1" height="2.1" fill="#2f3f55"/><rect x="211.56" y="868.9" width="2.1" height="2.1" fill="#2f3f55"/><rect x="198.36" y="881.6999999999999" width="2.1" height="2.1" fill="#2f3f55"/><path d="M201.36 869.9H210.56M199.36 871.9V880.6999999999999M201.36 882.6999999999999H205.36L207.86 883.9M212.56 871.9V876.9" stroke="#2a2a2a" stroke-width="1.1" fill="none"/><path d="M207.76000000000002 884.1999999999999L208.56 881.4L212.66000000000003 877.3L214.76000000000002 879.4L210.66000000000003 883.5Z" fill="#e8b020"/><path d="M212.66000000000003 877.3L213.56 876.4Q214.96 876.1 215.66000000000003 878.5L214.76000000000002 879.4Z" fill="#d8404a"/><path d="M230.2 888V894" stroke="#cdcdcd" stroke-width="1.2"/><rect x="222.34" y="868.9" width="2.1" height="2.1" fill="#2f3f55"/><rect x="235.54" y="868.9" width="2.1" height="2.1" fill="#2f3f55"/><rect x="222.34" y="881.6999999999999" width="2.1" height="2.1" fill="#2f3f55"/><path d="M225.34 869.9H234.54M223.34 871.9V880.6999999999999M225.34 882.6999999999999H229.34L231.84 883.9M236.54 871.9V876.9" stroke="#2a2a2a" stroke-width="1.1" fill="none"/><path d="M231.74 884.1999999999999L232.54 881.4L236.64000000000001 877.3L238.74 879.4L234.64000000000001 883.5Z" fill="#e8b020"/><path d="M236.64000000000001 877.3L237.54 876.4Q238.94 876.1 239.64000000000001 878.5L238.74 879.4Z" fill="#d8404a"/><path d="M254.2 888V894" stroke="#cdcdcd" stroke-width="1.2"/><rect x="246.32000000000002" y="868.9" width="2.1" height="2.1" fill="#2f3f55"/><rect x="259.52000000000004" y="868.9" width="2.1" height="2.1" fill="#2f3f55"/><rect x="246.32000000000002" y="881.6999999999999" width="2.1" height="2.1" fill="#2f3f55"/><path d="M249.32000000000002 869.9H258.52000000000004M247.32000000000002 871.9V880.6999999999999M249.32000000000002 882.6999999999999H253.32000000000002L255.82000000000002 883.9M260.52000000000004 871.9V876.9" stroke="#2a2a2a" stroke-width="1.1" fill="none"/><path d="M255.72000000000003 884.1999999999999L256.52000000000004 881.4L260.62 877.3L262.72 879.4L258.62 883.5Z" fill="#e8b020"/><path d="M260.62 877.3L261.52000000000004 876.4Q262.92 876.1 263.62 878.5L262.72 879.4Z" fill="#d8404a"/><path d="M278.2 888V894" stroke="#cdcdcd" stroke-width="1.2"/><rect x="270.30000000000007" y="868.9" width="2.1" height="2.1" fill="#2f3f55"/><rect x="283.50000000000006" y="868.9" width="2.1" height="2.1" fill="#2f3f55"/><rect x="270.30000000000007" y="881.6999999999999" width="2.1" height="2.1" fill="#2f3f55"/><path d="M273.30000000000007 869.9H282.50000000000006M271.30000000000007 871.9V880.6999999999999M273.30000000000007 882.6999999999999H277.30000000000007L279.80000000000007 883.9M284.50000000000006 871.9V876.9" stroke="#2a2a2a" stroke-width="1.1" fill="none"/><path d="M279.70000000000005 884.1999999999999L280.50000000000006 881.4L284.6000000000001 877.3L286.70000000000005 879.4L282.6000000000001 883.5Z" fill="#e8b020"/><path d="M284.6000000000001 877.3L285.50000000000006 876.4Q286.9000000000001 876.1 287.6000000000001 878.5L286.70000000000005 879.4Z" fill="#d8404a"/><path d="M302.2 888V894" stroke="#cdcdcd" stroke-width="1.2"/><rect x="294.28000000000003" y="868.9" width="2.1" height="2.1" fill="#2f3f55"/><rect x="307.48" y="868.9" width="2.1" height="2.1" fill="#2f3f55"/><rect x="294.28000000000003" y="881.6999999999999" width="2.1" height="2.1" fill="#2f3f55"/><path d="M297.28000000000003 869.9H306.48M295.28000000000003 871.9V880.6999999999999M297.28000000000003 882.6999999999999H301.28000000000003L303.78000000000003 883.9M308.48 871.9V876.9" stroke="#2a2a2a" stroke-width="1.1" fill="none"/><path d="M303.68 884.1999999999999L304.48 881.4L308.58000000000004 877.3L310.68 879.4L306.58000000000004 883.5Z" fill="#e8b020"/><path d="M308.58000000000004 877.3L309.48 876.4Q310.88000000000005 876.1 311.58000000000004 878.5L310.68 879.4Z" fill="#d8404a"/><rect x="314.5" y="865.1" width="23.7" height="23.3" rx="2" fill="#7ec4ea"/><path d="M326.2 888V894" stroke="#cdcdcd" stroke-width="1.2"/><rect x="318.26000000000005" y="868.9" width="2.1" height="2.1" fill="#2f3f55"/><rect x="331.46000000000004" y="868.9" width="2.1" height="2.1" fill="#2f3f55"/><rect x="318.26000000000005" y="881.6999999999999" width="2.1" height="2.1" fill="#2f3f55"/><path d="M321.26000000000005 869.9H330.46000000000004M319.26000000000005 871.9V880.6999999999999M321.26000000000005 882.6999999999999H325.26000000000005L327.76000000000005 883.9M332.46000000000004 871.9V876.9" stroke="#2a2a2a" stroke-width="1.1" fill="none"/><path d="M327.66 884.1999999999999L328.46000000000004 881.4L332.56000000000006 877.3L334.66 879.4L330.56000000000006 883.5Z" fill="#e8b020"/><path d="M332.56000000000006 877.3L333.46000000000004 876.4Q334.86000000000007 876.1 335.56000000000006 878.5L334.66 879.4Z" fill="#d8404a"/><path d="M350.1 888V894" stroke="#cdcdcd" stroke-width="1.2"/><rect x="342.24" y="868.9" width="2.1" height="2.1" fill="#2f3f55"/><rect x="355.44" y="868.9" width="2.1" height="2.1" fill="#2f3f55"/><rect x="342.24" y="881.6999999999999" width="2.1" height="2.1" fill="#2f3f55"/><path d="M345.24 869.9H354.44M343.24 871.9V880.6999999999999M345.24 882.6999999999999H349.24L351.74 883.9M356.44 871.9V876.9" stroke="#2a2a2a" stroke-width="1.1" fill="none"/><path d="M351.64 884.1999999999999L352.44 881.4L356.54 877.3L358.64 879.4L354.54 883.5Z" fill="#e8b020"/><path d="M356.54 877.3L357.44 876.4Q358.84000000000003 876.1 359.54 878.5L358.64 879.4Z" fill="#d8404a"/><path d="M374.1 888V894" stroke="#cdcdcd" stroke-width="1.2"/><rect x="366.22" y="868.9" width="2.1" height="2.1" fill="#2f3f55"/><rect x="379.42" y="868.9" width="2.1" height="2.1" fill="#2f3f55"/><rect x="366.22" y="881.6999999999999" width="2.1" height="2.1" fill="#2f3f55"/><path d="M369.22 869.9H378.42M367.22 871.9V880.6999999999999M369.22 882.6999999999999H373.22L375.72 883.9M380.42 871.9V876.9" stroke="#2a2a2a" stroke-width="1.1" fill="none"/><path d="M375.62 884.1999999999999L376.42 881.4L380.52000000000004 877.3L382.62 879.4L378.52000000000004 883.5Z" fill="#e8b020"/><path d="M380.52000000000004 877.3L381.42 876.4Q382.82000000000005 876.1 383.52000000000004 878.5L382.62 879.4Z" fill="#d8404a"/><path d="M398.1 888V894" stroke="#cdcdcd" stroke-width="1.2"/><path d="M390.3 870.5Q390.3 869 391.8 869H402.0V881Q402.0 883 400.0 883H390.3Z" fill="#5ba3e6" stroke="#4a8acb" stroke-width="0.7"/><path d="M390.3 870H401.5V872H390.3Z" fill="#8fc6f2"/><path d="M390.6 883H400.0Q402.0 883 402.0 881V883Q401.8 885 399.8 885H390.6Z" fill="#b9c4cc"/><path d="M404.6 882V871.5" stroke="#1a1a1a" stroke-width="1"/><path d="M403.1 872.6L404.6 869.6L406.1 872.6Z" fill="#1a1a1a"/><path d="M422.1 888V894" stroke="#cdcdcd" stroke-width="1.2"/><rect x="414.18000000000006" y="868.9" width="2.1" height="2.1" fill="#2f3f55"/><rect x="427.38000000000005" y="868.9" width="2.1" height="2.1" fill="#2f3f55"/><rect x="414.18000000000006" y="881.6999999999999" width="2.1" height="2.1" fill="#2f3f55"/><path d="M417.18000000000006 869.9H426.38000000000005M415.18000000000006 871.9V880.6999999999999M417.18000000000006 882.6999999999999H421.18000000000006L423.68000000000006 883.9M428.38000000000005 871.9V876.9" stroke="#2a2a2a" stroke-width="1.1" fill="none"/><path d="M423.58000000000004 884.1999999999999L424.38000000000005 881.4L428.4800000000001 877.3L430.58000000000004 879.4L426.4800000000001 883.5Z" fill="#e8b020"/><path d="M428.4800000000001 877.3L429.38000000000005 876.4Q430.7800000000001 876.1 431.4800000000001 878.5L430.58000000000004 879.4Z" fill="#d8404a"/><path d="M446.1 888V894" stroke="#cdcdcd" stroke-width="1.2"/><path d="M438.26 870.5Q438.26 869 439.76 869H449.96V881Q449.96 883 447.96 883H438.26Z" fill="#5ba3e6" stroke="#4a8acb" stroke-width="0.7"/><path d="M438.26 870H449.46V872H438.26Z" fill="#8fc6f2"/><path d="M438.56 883H447.96Q449.96 883 449.96 881V883Q449.76 885 447.76 885H438.56Z" fill="#b9c4cc"/><path d="M452.56 882V871.5" stroke="#1a1a1a" stroke-width="1"/><path d="M451.06 872.6L452.56 869.6L454.06 872.6Z" fill="#1a1a1a"/><path d="M470.0 888V894" stroke="#cdcdcd" stroke-width="1.2"/><rect x="462.14000000000004" y="868.9" width="2.1" height="2.1" fill="#2f3f55"/><rect x="475.34000000000003" y="868.9" width="2.1" height="2.1" fill="#2f3f55"/><rect x="462.14000000000004" y="881.6999999999999" width="2.1" height="2.1" fill="#2f3f55"/><path d="M465.14000000000004 869.9H474.34000000000003M463.14000000000004 871.9V880.6999999999999M465.14000000000004 882.6999999999999H469.14000000000004L471.64000000000004 883.9M476.34000000000003 871.9V876.9" stroke="#2a2a2a" stroke-width="1.1" fill="none"/><path d="M471.54 884.1999999999999L472.34000000000003 881.4L476.44000000000005 877.3L478.54 879.4L474.44000000000005 883.5Z" fill="#e8b020"/><path d="M476.44000000000005 877.3L477.34000000000003 876.4Q478.74000000000007 876.1 479.44000000000005 878.5L478.54 879.4Z" fill="#d8404a"/><path d="M494.0 888V894" stroke="#cdcdcd" stroke-width="1.2"/><rect x="486.12000000000006" y="868.9" width="2.1" height="2.1" fill="#2f3f55"/><rect x="499.32000000000005" y="868.9" width="2.1" height="2.1" fill="#2f3f55"/><rect x="486.12000000000006" y="881.6999999999999" width="2.1" height="2.1" fill="#2f3f55"/><path d="M489.12000000000006 869.9H498.32000000000005M487.12000000000006 871.9V880.6999999999999M489.12000000000006 882.6999999999999H493.12000000000006L495.62000000000006 883.9M500.32000000000005 871.9V876.9" stroke="#2a2a2a" stroke-width="1.1" fill="none"/><path d="M495.52000000000004 884.1999999999999L496.32000000000005 881.4L500.4200000000001 877.3L502.52000000000004 879.4L498.4200000000001 883.5Z" fill="#e8b020"/><path d="M500.4200000000001 877.3L501.32000000000005 876.4Q502.7200000000001 876.1 503.4200000000001 878.5L502.52000000000004 879.4Z" fill="#d8404a"/><path d="M518.0 888V894" stroke="#cdcdcd" stroke-width="1.2"/><path d="M510.2 870.5Q510.2 869 511.7 869H521.9V881Q521.9 883 519.9 883H510.2Z" fill="#5ba3e6" stroke="#4a8acb" stroke-width="0.7"/><path d="M510.2 870H521.4V872H510.2Z" fill="#8fc6f2"/><path d="M510.5 883H519.9Q521.9 883 521.9 881V883Q521.7 885 519.7 885H510.5Z" fill="#b9c4cc"/><path d="M524.5 882V871.5" stroke="#1a1a1a" stroke-width="1"/><path d="M523.0 872.6L524.5 869.6L526.0 872.6Z" fill="#1a1a1a"/><path d="M542.0 888V894" stroke="#cdcdcd" stroke-width="1.2"/><rect x="534.08" y="868.9" width="2.1" height="2.1" fill="#2f3f55"/><rect x="547.2800000000001" y="868.9" width="2.1" height="2.1" fill="#2f3f55"/><rect x="534.08" y="881.6999999999999" width="2.1" height="2.1" fill="#2f3f55"/><path d="M537.08 869.9H546.2800000000001M535.08 871.9V880.6999999999999M537.08 882.6999999999999H541.08L543.58 883.9M548.2800000000001 871.9V876.9" stroke="#2a2a2a" stroke-width="1.1" fill="none"/><path d="M543.48 884.1999999999999L544.2800000000001 881.4L548.38 877.3L550.48 879.4L546.38 883.5Z" fill="#e8b020"/><path d="M548.38 877.3L549.2800000000001 876.4Q550.6800000000001 876.1 551.38 878.5L550.48 879.4Z" fill="#d8404a"/><path d="M566.0 888V894" stroke="#cdcdcd" stroke-width="1.2"/><path d="M558.1600000000001 870.5Q558.1600000000001 869 559.6600000000001 869H569.8600000000001V881Q569.8600000000001 883 567.8600000000001 883H558.1600000000001Z" fill="#5ba3e6" stroke="#4a8acb" stroke-width="0.7"/><path d="M558.1600000000001 870H569.3600000000001V872H558.1600000000001Z" fill="#8fc6f2"/><path d="M558.46 883H567.8600000000001Q569.8600000000001 883 569.8600000000001 881V883Q569.6600000000001 885 567.6600000000001 885H558.46Z" fill="#b9c4cc"/><path d="M572.46 882V871.5" stroke="#1a1a1a" stroke-width="1"/><path d="M570.96 872.6L572.46 869.6L573.96 872.6Z" fill="#1a1a1a"/><path d="M589.9 888V894" stroke="#cdcdcd" stroke-width="1.2"/><rect x="582.0400000000001" y="868.9" width="2.1" height="2.1" fill="#2f3f55"/><rect x="595.2400000000001" y="868.9" width="2.1" height="2.1" fill="#2f3f55"/><rect x="582.0400000000001" y="881.6999999999999" width="2.1" height="2.1" fill="#2f3f55"/><path d="M585.0400000000001 869.9H594.2400000000001M583.0400000000001 871.9V880.6999999999999M585.0400000000001 882.6999999999999H589.0400000000001L591.5400000000001 883.9M596.2400000000001 871.9V876.9" stroke="#2a2a2a" stroke-width="1.1" fill="none"/><path d="M591.44 884.1999999999999L592.2400000000001 881.4L596.34 877.3L598.44 879.4L594.34 883.5Z" fill="#e8b020"/><path d="M596.34 877.3L597.2400000000001 876.4Q598.6400000000001 876.1 599.34 878.5L598.44 879.4Z" fill="#d8404a"/><path d="M613.9 888V894" stroke="#cdcdcd" stroke-width="1.2"/><rect x="606.0200000000001" y="868.9" width="2.1" height="2.1" fill="#2f3f55"/><rect x="619.2200000000001" y="868.9" width="2.1" height="2.1" fill="#2f3f55"/><rect x="606.0200000000001" y="881.6999999999999" width="2.1" height="2.1" fill="#2f3f55"/><path d="M609.0200000000001 869.9H618.2200000000001M607.0200000000001 871.9V880.6999999999999M609.0200000000001 882.6999999999999H613.0200000000001L615.5200000000001 883.9M620.2200000000001 871.9V876.9" stroke="#2a2a2a" stroke-width="1.1" fill="none"/><path d="M615.4200000000001 884.1999999999999L616.2200000000001 881.4L620.32 877.3L622.4200000000001 879.4L618.32 883.5Z" fill="#e8b020"/><path d="M620.32 877.3L621.2200000000001 876.4Q622.6200000000001 876.1 623.32 878.5L622.4200000000001 879.4Z" fill="#d8404a"/><path d="M637.9 888V894" stroke="#cdcdcd" stroke-width="1.2"/><path d="M630.1000000000001 870.5Q630.1000000000001 869 631.6000000000001 869H641.8000000000002V881Q641.8000000000002 883 639.8000000000002 883H630.1000000000001Z" fill="#5ba3e6" stroke="#4a8acb" stroke-width="0.7"/><path d="M630.1000000000001 870H641.3000000000002V872H630.1000000000001Z" fill="#8fc6f2"/><path d="M630.4000000000001 883H639.8000000000002Q641.8000000000002 883 641.8000000000002 881V883Q641.6000000000001 885 639.6000000000001 885H630.4000000000001Z" fill="#b9c4cc"/><path d="M644.4000000000001 882V871.5" stroke="#1a1a1a" stroke-width="1"/><path d="M642.9000000000001 872.6L644.4000000000001 869.6L645.9000000000001 872.6Z" fill="#1a1a1a"/><path d="M661.9 888V894" stroke="#cdcdcd" stroke-width="1.2"/><rect x="653.98" y="868.9" width="2.1" height="2.1" fill="#2f3f55"/><rect x="667.1800000000001" y="868.9" width="2.1" height="2.1" fill="#2f3f55"/><rect x="653.98" y="881.6999999999999" width="2.1" height="2.1" fill="#2f3f55"/><path d="M656.98 869.9H666.1800000000001M654.98 871.9V880.6999999999999M656.98 882.6999999999999H660.98L663.48 883.9M668.1800000000001 871.9V876.9" stroke="#2a2a2a" stroke-width="1.1" fill="none"/><path d="M663.38 884.1999999999999L664.1800000000001 881.4L668.28 877.3L670.38 879.4L666.28 883.5Z" fill="#e8b020"/><path d="M668.28 877.3L669.1800000000001 876.4Q670.58 876.1 671.28 878.5L670.38 879.4Z" fill="#d8404a"/><path d="M685.9 888V894" stroke="#cdcdcd" stroke-width="1.2"/><path d="M678.0600000000002 870.5Q678.0600000000002 869 679.5600000000002 869H689.7600000000002V881Q689.7600000000002 883 687.7600000000002 883H678.0600000000002Z" fill="#5ba3e6" stroke="#4a8acb" stroke-width="0.7"/><path d="M678.0600000000002 870H689.2600000000002V872H678.0600000000002Z" fill="#8fc6f2"/><path d="M678.3600000000001 883H687.7600000000002Q689.7600000000002 883 689.7600000000002 881V883Q689.5600000000002 885 687.5600000000002 885H678.3600000000001Z" fill="#b9c4cc"/><path d="M692.3600000000001 882V871.5" stroke="#1a1a1a" stroke-width="1"/><path d="M690.8600000000001 872.6L692.3600000000001 869.6L693.8600000000001 872.6Z" fill="#1a1a1a"/><path d="M709.8 888V894" stroke="#cdcdcd" stroke-width="1.2"/><rect x="701.9399999999999" y="868.9" width="2.1" height="2.1" fill="#2f3f55"/><rect x="715.14" y="868.9" width="2.1" height="2.1" fill="#2f3f55"/><rect x="701.9399999999999" y="881.6999999999999" width="2.1" height="2.1" fill="#2f3f55"/><path d="M704.9399999999999 869.9H714.14M702.9399999999999 871.9V880.6999999999999M704.9399999999999 882.6999999999999H708.9399999999999L711.4399999999999 883.9M716.14 871.9V876.9" stroke="#2a2a2a" stroke-width="1.1" fill="none"/><path d="M711.3399999999999 884.1999999999999L712.14 881.4L716.2399999999999 877.3L718.3399999999999 879.4L714.2399999999999 883.5Z" fill="#e8b020"/><path d="M716.2399999999999 877.3L717.14 876.4Q718.54 876.1 719.2399999999999 878.5L718.3399999999999 879.4Z" fill="#d8404a"/><path d="M733.8 888V894" stroke="#cdcdcd" stroke-width="1.2"/><path d="M726.02 870.5Q726.02 869 727.52 869H737.72V881Q737.72 883 735.72 883H726.02Z" fill="#5ba3e6" stroke="#4a8acb" stroke-width="0.7"/><path d="M726.02 870H737.22V872H726.02Z" fill="#8fc6f2"/><path d="M726.3199999999999 883H735.72Q737.72 883 737.72 881V883Q737.52 885 735.52 885H726.3199999999999Z" fill="#b9c4cc"/><path d="M740.3199999999999 882V871.5" stroke="#1a1a1a" stroke-width="1"/><path d="M738.8199999999999 872.6L740.3199999999999 869.6L741.8199999999999 872.6Z" fill="#1a1a1a"/><path d="M757.8 888V894" stroke="#cdcdcd" stroke-width="1.2"/><rect x="749.9" y="868.9" width="2.1" height="2.1" fill="#2f3f55"/><rect x="763.1" y="868.9" width="2.1" height="2.1" fill="#2f3f55"/><rect x="749.9" y="881.6999999999999" width="2.1" height="2.1" fill="#2f3f55"/><path d="M752.9 869.9H762.1M750.9 871.9V880.6999999999999M752.9 882.6999999999999H756.9L759.4 883.9M764.1 871.9V876.9" stroke="#2a2a2a" stroke-width="1.1" fill="none"/><path d="M759.3 884.1999999999999L760.1 881.4L764.1999999999999 877.3L766.3 879.4L762.1999999999999 883.5Z" fill="#e8b020"/><path d="M764.1999999999999 877.3L765.1 876.4Q766.5 876.1 767.1999999999999 878.5L766.3 879.4Z" fill="#d8404a"/><path d="M781.8 888V894" stroke="#cdcdcd" stroke-width="1.2"/><path d="M773.98 870.5Q773.98 869 775.48 869H785.6800000000001V881Q785.6800000000001 883 783.6800000000001 883H773.98Z" fill="#5ba3e6" stroke="#4a8acb" stroke-width="0.7"/><path d="M773.98 870H785.1800000000001V872H773.98Z" fill="#8fc6f2"/><path d="M774.28 883H783.6800000000001Q785.6800000000001 883 785.6800000000001 881V883Q785.48 885 783.48 885H774.28Z" fill="#b9c4cc"/><path d="M788.28 882V871.5" stroke="#1a1a1a" stroke-width="1"/><path d="M786.78 872.6L788.28 869.6L789.78 872.6Z" fill="#1a1a1a"/><path d="M805.8 888V894" stroke="#cdcdcd" stroke-width="1.2"/><rect x="797.86" y="868.9" width="2.1" height="2.1" fill="#2f3f55"/><rect x="811.0600000000001" y="868.9" width="2.1" height="2.1" fill="#2f3f55"/><rect x="797.86" y="881.6999999999999" width="2.1" height="2.1" fill="#2f3f55"/><path d="M800.86 869.9H810.0600000000001M798.86 871.9V880.6999999999999M800.86 882.6999999999999H804.86L807.36 883.9M812.0600000000001 871.9V876.9" stroke="#2a2a2a" stroke-width="1.1" fill="none"/><path d="M807.26 884.1999999999999L808.0600000000001 881.4L812.16 877.3L814.26 879.4L810.16 883.5Z" fill="#e8b020"/><path d="M812.16 877.3L813.0600000000001 876.4Q814.46 876.1 815.16 878.5L814.26 879.4Z" fill="#d8404a"/><path d="M829.7 888V894" stroke="#cdcdcd" stroke-width="1.2"/><path d="M821.94 870.5Q821.94 869 823.44 869H833.6400000000001V881Q833.6400000000001 883 831.6400000000001 883H821.94Z" fill="#5ba3e6" stroke="#4a8acb" stroke-width="0.7"/><path d="M821.94 870H833.1400000000001V872H821.94Z" fill="#8fc6f2"/><path d="M822.24 883H831.6400000000001Q833.6400000000001 883 833.6400000000001 881V883Q833.44 885 831.44 885H822.24Z" fill="#b9c4cc"/><path d="M836.24 882V871.5" stroke="#1a1a1a" stroke-width="1"/><path d="M834.74 872.6L836.24 869.6L837.74 872.6Z" fill="#1a1a1a"/><path d="M853.7 888V894" stroke="#cdcdcd" stroke-width="1.2"/><rect x="845.82" y="868.9" width="2.1" height="2.1" fill="#2f3f55"/><rect x="859.0200000000001" y="868.9" width="2.1" height="2.1" fill="#2f3f55"/><rect x="845.82" y="881.6999999999999" width="2.1" height="2.1" fill="#2f3f55"/><path d="M848.82 869.9H858.0200000000001M846.82 871.9V880.6999999999999M848.82 882.6999999999999H852.82L855.32 883.9M860.0200000000001 871.9V876.9" stroke="#2a2a2a" stroke-width="1.1" fill="none"/><path d="M855.22 884.1999999999999L856.0200000000001 881.4L860.12 877.3L862.22 879.4L858.12 883.5Z" fill="#e8b020"/><path d="M860.12 877.3L861.0200000000001 876.4Q862.4200000000001 876.1 863.12 878.5L862.22 879.4Z" fill="#d8404a"/><path d="M877.7 888V894" stroke="#cdcdcd" stroke-width="1.2"/><rect x="869.8000000000001" y="868.9" width="2.1" height="2.1" fill="#2f3f55"/><rect x="883.0000000000001" y="868.9" width="2.1" height="2.1" fill="#2f3f55"/><rect x="869.8000000000001" y="881.6999999999999" width="2.1" height="2.1" fill="#2f3f55"/><path d="M872.8000000000001 869.9H882.0000000000001M870.8000000000001 871.9V880.6999999999999M872.8000000000001 882.6999999999999H876.8000000000001L879.3000000000001 883.9M884.0000000000001 871.9V876.9" stroke="#2a2a2a" stroke-width="1.1" fill="none"/><path d="M879.2 884.1999999999999L880.0000000000001 881.4L884.1 877.3L886.2 879.4L882.1 883.5Z" fill="#e8b020"/><path d="M884.1 877.3L885.0000000000001 876.4Q886.4000000000001 876.1 887.1 878.5L886.2 879.4Z" fill="#d8404a"/><path d="M901.7 888V894" stroke="#cdcdcd" stroke-width="1.2"/><rect x="893.7800000000001" y="868.9" width="2.1" height="2.1" fill="#2f3f55"/><rect x="906.9800000000001" y="868.9" width="2.1" height="2.1" fill="#2f3f55"/><rect x="893.7800000000001" y="881.6999999999999" width="2.1" height="2.1" fill="#2f3f55"/><path d="M896.7800000000001 869.9H905.9800000000001M894.7800000000001 871.9V880.6999999999999M896.7800000000001 882.6999999999999H900.7800000000001L903.2800000000001 883.9M907.9800000000001 871.9V876.9" stroke="#2a2a2a" stroke-width="1.1" fill="none"/><path d="M903.1800000000001 884.1999999999999L903.9800000000001 881.4L908.08 877.3L910.1800000000001 879.4L906.08 883.5Z" fill="#e8b020"/><path d="M908.08 877.3L908.9800000000001 876.4Q910.3800000000001 876.1 911.08 878.5L910.1800000000001 879.4Z" fill="#d8404a"/><path d="M925.7 888V894" stroke="#cdcdcd" stroke-width="1.2"/><path d="M918.1600000000001 870.9L919.8600000000001 869.1H933.3600000000001V882.9L931.6600000000001 884.7H918.1600000000001Z" fill="#efefef" stroke="#3e3e3e" stroke-width="1"/><path d="M929.8600000000001 869.7H932.8600000000001V882.6L931.3600000000001 884.1H929.8600000000001Z" fill="#d4d4d4"/><circle cx="924.6600000000001" cy="877.7" r="4.6" fill="#e2f1fb" stroke="#444" stroke-width="0.9"/><path d="M923.6600000000001 874.7Q921.6600000000001 878.7 923.46 879.7Q925.6600000000001 881.1 928.2600000000001 879.7Q925.1600000000001 879.1 923.6600000000001 874.7Z" fill="#4a82b8"/><rect x="937.9" y="865.1" width="23.7" height="23.3" rx="2" fill="#7ec4ea"/><path d="M949.6 888V894" stroke="#cdcdcd" stroke-width="1.2"/><rect x="941.7400000000001" y="868.9" width="2.1" height="2.1" fill="#2f3f55"/><rect x="954.9400000000002" y="868.9" width="2.1" height="2.1" fill="#2f3f55"/><rect x="941.7400000000001" y="881.6999999999999" width="2.1" height="2.1" fill="#2f3f55"/><path d="M944.7400000000001 869.9H953.9400000000002M942.7400000000001 871.9V880.6999999999999M944.7400000000001 882.6999999999999H948.7400000000001L951.2400000000001 883.9M955.9400000000002 871.9V876.9" stroke="#2a2a2a" stroke-width="1.1" fill="none"/><path d="M951.1400000000001 884.1999999999999L951.9400000000002 881.4L956.0400000000001 877.3L958.1400000000001 879.4L954.0400000000001 883.5Z" fill="#e8b020"/><path d="M956.0400000000001 877.3L956.9400000000002 876.4Q958.3400000000001 876.1 959.0400000000001 878.5L958.1400000000001 879.4Z" fill="#d8404a"/><path d="M973.6 888V894" stroke="#cdcdcd" stroke-width="1.2"/><rect x="965.7200000000001" y="868.9" width="2.1" height="2.1" fill="#2f3f55"/><rect x="978.9200000000002" y="868.9" width="2.1" height="2.1" fill="#2f3f55"/><rect x="965.7200000000001" y="881.6999999999999" width="2.1" height="2.1" fill="#2f3f55"/><path d="M968.7200000000001 869.9H977.9200000000002M966.7200000000001 871.9V880.6999999999999M968.7200000000001 882.6999999999999H972.7200000000001L975.2200000000001 883.9M979.9200000000002 871.9V876.9" stroke="#2a2a2a" stroke-width="1.1" fill="none"/><path d="M975.1200000000001 884.1999999999999L975.9200000000002 881.4L980.0200000000001 877.3L982.1200000000001 879.4L978.0200000000001 883.5Z" fill="#e8b020"/><path d="M980.0200000000001 877.3L980.9200000000002 876.4Q982.3200000000002 876.1 983.0200000000001 878.5L982.1200000000001 879.4Z" fill="#d8404a"/><path d="M997.6 888V894" stroke="#cdcdcd" stroke-width="1.2"/><rect x="989.7000000000002" y="868.9" width="2.1" height="2.1" fill="#2f3f55"/><rect x="1002.9000000000002" y="868.9" width="2.1" height="2.1" fill="#2f3f55"/><rect x="989.7000000000002" y="881.6999999999999" width="2.1" height="2.1" fill="#2f3f55"/><path d="M992.7000000000002 869.9H1001.9000000000002M990.7000000000002 871.9V880.6999999999999M992.7000000000002 882.6999999999999H996.7000000000002L999.2000000000002 883.9M1003.9000000000002 871.9V876.9" stroke="#2a2a2a" stroke-width="1.1" fill="none"/><path d="M999.1000000000001 884.1999999999999L999.9000000000002 881.4L1004.0000000000001 877.3L1006.1000000000001 879.4L1002.0000000000001 883.5Z" fill="#e8b020"/><path d="M1004.0000000000001 877.3L1004.9000000000002 876.4Q1006.3000000000002 876.1 1007.0000000000001 878.5L1006.1000000000001 879.4Z" fill="#d8404a"/><path d="M1021.6 888V894" stroke="#cdcdcd" stroke-width="1.2"/><path d="M1014.0799999999999 870.9L1015.78 869.1H1029.28V882.9L1027.58 884.7H1014.0799999999999Z" fill="#efefef" stroke="#3e3e3e" stroke-width="1"/><path d="M1025.78 869.7H1028.78V882.6L1027.28 884.1H1025.78Z" fill="#d4d4d4"/><circle cx="1020.5799999999999" cy="877.7" r="4.6" fill="#e2f1fb" stroke="#444" stroke-width="0.9"/><path d="M1019.5799999999999 874.7Q1017.5799999999999 878.7 1019.3799999999999 879.7Q1021.5799999999999 881.1 1024.1799999999998 879.7Q1021.0799999999999 879.1 1019.5799999999999 874.7Z" fill="#4a82b8"/><path d="M1045.6 888V894" stroke="#cdcdcd" stroke-width="1.2"/><rect x="1037.6599999999999" y="868.9" width="2.1" height="2.1" fill="#2f3f55"/><rect x="1050.86" y="868.9" width="2.1" height="2.1" fill="#2f3f55"/><rect x="1037.6599999999999" y="881.6999999999999" width="2.1" height="2.1" fill="#2f3f55"/><path d="M1040.6599999999999 869.9H1049.86M1038.6599999999999 871.9V880.6999999999999M1040.6599999999999 882.6999999999999H1044.6599999999999L1047.1599999999999 883.9M1051.86 871.9V876.9" stroke="#2a2a2a" stroke-width="1.1" fill="none"/><path d="M1047.06 884.1999999999999L1047.86 881.4L1051.9599999999998 877.3L1054.06 879.4L1049.9599999999998 883.5Z" fill="#e8b020"/><path d="M1051.9599999999998 877.3L1052.86 876.4Q1054.2599999999998 876.1 1054.9599999999998 878.5L1054.06 879.4Z" fill="#d8404a"/><path d="M1069.5 888V894" stroke="#cdcdcd" stroke-width="1.2"/><path d="M1062.04 870.9L1063.74 869.1H1077.24V882.9L1075.54 884.7H1062.04Z" fill="#efefef" stroke="#3e3e3e" stroke-width="1"/><path d="M1073.74 869.7H1076.74V882.6L1075.24 884.1H1073.74Z" fill="#d4d4d4"/><circle cx="1068.54" cy="877.7" r="4.6" fill="#e2f1fb" stroke="#444" stroke-width="0.9"/><path d="M1067.54 874.7Q1065.54 878.7 1067.34 879.7Q1069.54 881.1 1072.1399999999999 879.7Q1069.04 879.1 1067.54 874.7Z" fill="#4a82b8"/><path d="M1093.5 888V894" stroke="#cdcdcd" stroke-width="1.2"/><path d="M1086.02 870.9L1087.72 869.1H1101.22V882.9L1099.52 884.7H1086.02Z" fill="#efefef" stroke="#3e3e3e" stroke-width="1"/><path d="M1097.72 869.7H1100.72V882.6L1099.22 884.1H1097.72Z" fill="#d4d4d4"/><circle cx="1092.52" cy="877.7" r="4.6" fill="#e2f1fb" stroke="#444" stroke-width="0.9"/><path d="M1091.52 874.7Q1089.52 878.7 1091.32 879.7Q1093.52 881.1 1096.12 879.7Q1093.02 879.1 1091.52 874.7Z" fill="#4a82b8"/><path d="M1117.5 888V894" stroke="#cdcdcd" stroke-width="1.2"/><path d="M1110.0 870.9L1111.7 869.1H1125.2V882.9L1123.5 884.7H1110.0Z" fill="#efefef" stroke="#3e3e3e" stroke-width="1"/><path d="M1121.7 869.7H1124.7V882.6L1123.2 884.1H1121.7Z" fill="#d4d4d4"/><circle cx="1116.5" cy="877.7" r="4.6" fill="#e2f1fb" stroke="#444" stroke-width="0.9"/><path d="M1115.5 874.7Q1113.5 878.7 1115.3 879.7Q1117.5 881.1 1120.1 879.7Q1117.0 879.1 1115.5 874.7Z" fill="#4a82b8"/><path d="M1141.5 888V894" stroke="#cdcdcd" stroke-width="1.2"/><path d="M1133.98 870.9L1135.68 869.1H1149.18V882.9L1147.48 884.7H1133.98Z" fill="#efefef" stroke="#3e3e3e" stroke-width="1"/><path d="M1145.68 869.7H1148.68V882.6L1147.18 884.1H1145.68Z" fill="#d4d4d4"/><circle cx="1140.48" cy="877.7" r="4.6" fill="#e2f1fb" stroke="#444" stroke-width="0.9"/><path d="M1139.48 874.7Q1137.48 878.7 1139.28 879.7Q1141.48 881.1 1144.08 879.7Q1140.98 879.1 1139.48 874.7Z" fill="#4a82b8"/><path d="M1165.5 888V894" stroke="#cdcdcd" stroke-width="1.2"/><path d="M1157.96 870.9L1159.66 869.1H1173.16V882.9L1171.46 884.7H1157.96Z" fill="#efefef" stroke="#3e3e3e" stroke-width="1"/><path d="M1169.66 869.7H1172.66V882.6L1171.16 884.1H1169.66Z" fill="#d4d4d4"/><circle cx="1164.46" cy="877.7" r="4.6" fill="#e2f1fb" stroke="#444" stroke-width="0.9"/><path d="M1163.46 874.7Q1161.46 878.7 1163.26 879.7Q1165.46 881.1 1168.06 879.7Q1164.96 879.1 1163.46 874.7Z" fill="#4a82b8"/><path d="M1189.4 888V894" stroke="#cdcdcd" stroke-width="1.2"/><path d="M1181.94 870.9L1183.64 869.1H1197.14V882.9L1195.44 884.7H1181.94Z" fill="#efefef" stroke="#3e3e3e" stroke-width="1"/><path d="M1193.64 869.7H1196.64V882.6L1195.14 884.1H1193.64Z" fill="#d4d4d4"/><circle cx="1188.44" cy="877.7" r="4.6" fill="#e2f1fb" stroke="#444" stroke-width="0.9"/><path d="M1187.44 874.7Q1185.44 878.7 1187.24 879.7Q1189.44 881.1 1192.04 879.7Q1188.94 879.1 1187.44 874.7Z" fill="#4a82b8"/><path d="M1213.4 888V894" stroke="#cdcdcd" stroke-width="1.2"/><path d="M1205.92 870.9L1207.6200000000001 869.1H1221.1200000000001V882.9L1219.42 884.7H1205.92Z" fill="#efefef" stroke="#3e3e3e" stroke-width="1"/><path d="M1217.6200000000001 869.7H1220.6200000000001V882.6L1219.1200000000001 884.1H1217.6200000000001Z" fill="#d4d4d4"/><circle cx="1212.42" cy="877.7" r="4.6" fill="#e2f1fb" stroke="#444" stroke-width="0.9"/><path d="M1211.42 874.7Q1209.42 878.7 1211.22 879.7Q1213.42 881.1 1216.02 879.7Q1212.92 879.1 1211.42 874.7Z" fill="#4a82b8"/><path d="M1237.4 888V894" stroke="#cdcdcd" stroke-width="1.2"/><rect x="1229.4999999999998" y="868.9" width="2.1" height="2.1" fill="#2f3f55"/><rect x="1242.6999999999998" y="868.9" width="2.1" height="2.1" fill="#2f3f55"/><rect x="1229.4999999999998" y="881.6999999999999" width="2.1" height="2.1" fill="#2f3f55"/><path d="M1232.4999999999998 869.9H1241.6999999999998M1230.4999999999998 871.9V880.6999999999999M1232.4999999999998 882.6999999999999H1236.4999999999998L1238.9999999999998 883.9M1243.6999999999998 871.9V876.9" stroke="#2a2a2a" stroke-width="1.1" fill="none"/><path d="M1238.8999999999999 884.1999999999999L1239.6999999999998 881.4L1243.7999999999997 877.3L1245.8999999999999 879.4L1241.7999999999997 883.5Z" fill="#e8b020"/><path d="M1243.7999999999997 877.3L1244.6999999999998 876.4Q1246.0999999999997 876.1 1246.7999999999997 878.5L1245.8999999999999 879.4Z" fill="#d8404a"/><path d="M1261.4 888V894" stroke="#cdcdcd" stroke-width="1.2"/><path d="M1253.58 870.5Q1253.58 869 1255.08 869H1265.28V881Q1265.28 883 1263.28 883H1253.58Z" fill="#5ba3e6" stroke="#4a8acb" stroke-width="0.7"/><path d="M1253.58 870H1264.78V872H1253.58Z" fill="#8fc6f2"/><path d="M1253.8799999999999 883H1263.28Q1265.28 883 1265.28 881V883Q1265.08 885 1263.08 885H1253.8799999999999Z" fill="#b9c4cc"/><path d="M1267.8799999999999 882V871.5" stroke="#1a1a1a" stroke-width="1"/><path d="M1266.3799999999999 872.6L1267.8799999999999 869.6L1269.3799999999999 872.6Z" fill="#1a1a1a"/><path d="M1268.5 863.5H1279.5V866L1275.2 869.5V893.5H1272.8V869.5L1268.5 866Z" fill="#2a2a2a"/><g transform="translate(1309.3,881.7)"><circle r="5.6" fill="#7a7a7a"/><rect x="-1.9" y="-8" width="3.8" height="4" fill="#7a7a7a" transform="rotate(0)"/><rect x="-1.9" y="-8" width="3.8" height="4" fill="#7a7a7a" transform="rotate(60)"/><rect x="-1.9" y="-8" width="3.8" height="4" fill="#7a7a7a" transform="rotate(120)"/><rect x="-1.9" y="-8" width="3.8" height="4" fill="#7a7a7a" transform="rotate(180)"/><rect x="-1.9" y="-8" width="3.8" height="4" fill="#7a7a7a" transform="rotate(240)"/><rect x="-1.9" y="-8" width="3.8" height="4" fill="#7a7a7a" transform="rotate(300)"/><circle r="2.6" fill="#f3f3f3"/></g></svg>
</body></html>
